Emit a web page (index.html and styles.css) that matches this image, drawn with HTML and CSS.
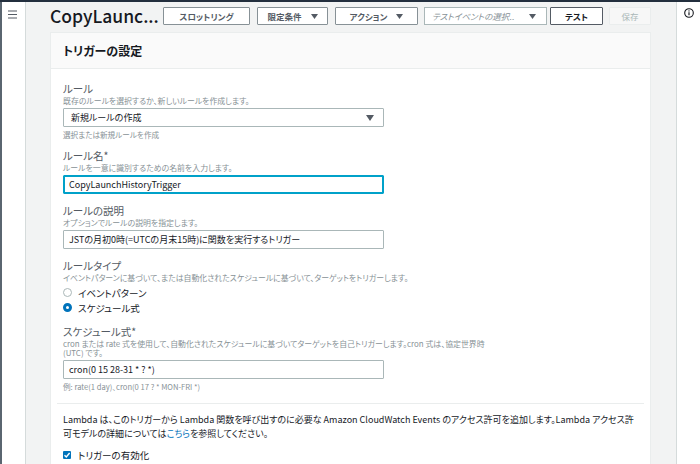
FILE: index.html
```html
<!DOCTYPE html>
<html lang="ja">
<head>
<meta charset="utf-8">
<title>CopyLaunchHistoryTrigger</title>
<link rel="stylesheet" href="styles.css">
</head>
<body>
<div class="topbar"></div>
<div class="app">
  <nav class="nav">
    <svg class="nav-toggle" width="9" height="9" viewBox="0 0 9 9"><path d="M0 1h9M0 4.5h9M0 8h9" stroke="#545b64" stroke-width="1.2"/></svg>
  </nav>
  <main class="main">
    <header class="toolbar">
      <h1 class="title">CopyLaunc...</h1>
      <div class="actions">
        <button class="btn btn-throttle">スロットリング</button>
        <button class="btn btn-qualifier">限定条件 <svg class="caret" width="7" height="5" viewBox="0 0 7 5"><path d="M0 0h7L3.5 5z" fill="#545b64"/></svg></button>
        <button class="btn btn-action">アクション <svg class="caret" width="7" height="5" viewBox="0 0 7 5"><path d="M0 0h7L3.5 5z" fill="#545b64"/></svg></button>
        <div class="test-select"><span>テストイベントの選択..</span><svg class="caret" width="7" height="5" viewBox="0 0 7 5"><path d="M0 0h7L3.5 5z" fill="#545b64"/></svg></div>
        <button class="btn btn-test">テスト</button>
        <button class="btn btn-save" disabled>保存</button>
      </div>
    </header>
    <section class="card">
      <div class="card-header">トリガーの設定</div>
      <div class="card-body">
        <div class="field field-hinted">
          <div class="field-label">ルール</div>
          <div class="field-desc">既存のルールを選択するか、新しいルールを作成します。</div>
          <div class="control control-select"><span>新規ルールの作成</span><svg width="8" height="6" viewBox="0 0 8 6"><path d="M0 0h8L4 6z" fill="#545b64"/></svg></div>
          <div class="field-hint">選択または新規ルールを作成</div>
        </div>
        <div class="field">
          <div class="field-label">ルール名*</div>
          <div class="field-desc">ルールを一意に識別するための名前を入力します。</div>
          <div class="control control-focus">CopyLaunchHistoryTrigger</div>
        </div>
        <div class="field">
          <div class="field-label">ルールの説明</div>
          <div class="field-desc">オプションでルールの説明を指定します。</div>
          <div class="control">JSTの月初0時(=UTCの月末15時)に関数を実行するトリガー</div>
        </div>
        <div class="field">
          <div class="field-label">ルールタイプ</div>
          <div class="field-desc">イベントパターンに基づいて、または自動化されたスケジュールに基づいて、ターゲットをトリガーします。</div>
          <div class="radios">
            <div class="radio"><span class="radio-dot"></span>イベントパターン</div>
            <div class="radio"><span class="radio-dot radio-on"></span>スケジュール式</div>
          </div>
        </div>
        <div class="field">
          <div class="field-label">スケジュール式*</div>
          <div class="field-desc">cron または rate 式を使用して、自動化されたスケジュールに基づいてターゲットを自己トリガーします。cron 式は、協定世界時 (UTC) です。</div>
          <div class="control">cron(0 15 28-31 * ? *)</div>
          <div class="field-hint">例: rate(1 day)、cron(0 17 ? * MON-FRI *)</div>
        </div>
        <hr class="sep">
        <p class="note">Lambda は、このトリガーから Lambda 関数を呼び出すのに必要な Amazon CloudWatch Events のアクセス許可を追加します。Lambda アクセス許可モデルの詳細については<a href="#" class="link">こちら</a>を参照してください。</p>
        <div class="check"><span class="check-box"><svg width="8" height="8" viewBox="0 0 8 8"><path d="M1.5 4.2l1.8 1.8 3.3-4" fill="none" stroke="#fff" stroke-width="1.4"/></svg></span>トリガーの有効化</div>
      </div>
    </section>
  </main>
  <aside class="panel">
    <svg class="info" width="10" height="10" viewBox="0 0 10 10"><circle cx="5" cy="5" r="4.3" fill="none" stroke="#16191f" stroke-width="1.1"/><path d="M5 4.3v3" stroke="#16191f" stroke-width="1.2"/><circle cx="5" cy="2.9" r="0.7" fill="#16191f"/></svg>
  </aside>
</div>
</body>
</html>
```

FILE: styles.css
```css
* { box-sizing: border-box; }

html, body {
  margin: 0;
  width: 700px;
  height: 464px;
  overflow: hidden;
}

body {
  font-family: "Noto Sans CJK JP", "Liberation Sans", sans-serif;
  font-feature-settings: "palt";
  color: #16191f;
  background: #fff;
}

.topbar {
  height: 2px;
  background: #232f3e;
}

.app {
  display: flex;
  height: 462px;
}

.nav {
  flex: none;
  width: 26px;
  background: #fff;
  border-left: 2px solid #5a6570;
  border-right: 1px solid #d5dbdb;
}

.nav-toggle {
  display: block;
  margin: 8px 0 0 6px;
}

.main {
  flex: 1;
  min-width: 0;
  display: flex;
  flex-direction: column;
  background: #f2f3f3;
  padding: 0 25px 0 24px;
}

.toolbar {
  flex: none;
  height: 30px;
  display: flex;
  align-items: center;
  justify-content: space-between;
  padding-bottom: 2px;
}

.title {
  margin: 0;
  font-size: 17.5px;
  font-weight: 500;
  line-height: 24px;
  color: #16191f;
}

.actions {
  display: flex;
  align-items: center;
  gap: 6px;
}

.btn {
  height: 18px;
  display: inline-flex;
  align-items: center;
  justify-content: center;
  gap: 9px;
  padding: 0;
  border: 1px solid #879196;
  border-radius: 1px;
  background: #fff;
  color: #545b64;
  font-family: inherit;
  font-feature-settings: "palt";
  font-size: 8.5px;
  font-weight: 700;
}

.btn-throttle { width: 87px; margin-right: 1px; }
.btn-qualifier { width: 71px; margin-right: 1px; }
.btn-action { width: 83px; }

.btn-test {
  width: 53px;
  border-color: #545b64;
  color: #16191f;
}

.btn-save {
  width: 42px;
  border-color: #eaeded;
  background: #f7f7f7;
  color: #aab7b8;
  font-weight: 400;
}

.test-select {
  width: 123px;
  height: 18px;
  margin-right: -3px;
  display: flex;
  align-items: center;
  justify-content: space-between;
  padding: 0 10px 0 7px;
  border: 1px solid #aab7b8;
  background: #fff;
  color: #879196;
  font-size: 8.5px;
  font-style: italic;
}

.caret { display: block; }

.card {
  flex: 1;
  background: #fff;
  border: 1px solid #eaeded;
  border-bottom: none;
}

.card-header {
  height: 36px;
  display: flex;
  align-items: center;
  padding: 0 0 1px 12px;
  background: #fafafa;
  border-bottom: 1px solid #eaeded;
  font-size: 12px;
  font-weight: 700;
  color: #16191f;
}

.card-body {
  padding: 13px 12px 0;
}

.field + .field { margin-top: 10px; }
.field-hinted { margin-bottom: 3px; }

.field-label {
  font-size: 10.5px;
  line-height: 14px;
  color: #545b64;
}

.field-desc {
  max-width: 430px;
  font-size: 7.9px;
  line-height: 9px;
  color: #879196;
}

.field-hint {
  margin-top: 3px;
  font-size: 7.6px;
  line-height: 9px;
  color: #879196;
}

.control {
  width: 321px;
  height: 19px;
  margin-top: 3px;
  display: flex;
  align-items: center;
  padding: 0 5px;
  border: 1px solid #aab7b8;
  border-radius: 1px;
  background: #fff;
  font-size: 9px;
  color: #16191f;
  white-space: nowrap;
}

.control-select {
  justify-content: space-between;
  padding: 0 9px 0 7px;
}

.control-focus {
  border-color: #00a1c9;
  box-shadow: inset 0 0 0 1px #00a1c9;
}

.radios {
  margin-top: 3px;
}

.radio {
  height: 15px;
  display: flex;
  align-items: center;
  gap: 6px;
  font-size: 9.5px;
  color: #16191f;
}

.radio-dot {
  width: 9px;
  height: 9px;
  border-radius: 50%;
  border: 1px solid #aab7b8;
  background: #fff;
}

.radio-on {
  border: 3px solid #0073bb;
}

.sep {
  margin: 12px -6px 0;
  border: 0;
  border-top: 1px solid #eaeded;
  height: 0;
}

.note {
  margin: 9px 0 0;
  font-size: 9px;
  line-height: 14px;
  color: #16191f;
}

.link {
  color: #0073bb;
  text-decoration: none;
}

.check {
  margin-top: 7px;
  height: 14px;
  display: flex;
  align-items: center;
  gap: 7px;
  font-size: 9.5px;
  color: #16191f;
}

.check-box {
  width: 8px;
  height: 8px;
  display: flex;
  align-items: center;
  justify-content: center;
  background: #0073bb;
  border-radius: 1px;
}

.check-box svg { display: block; }

.panel {
  flex: none;
  width: 24px;
  background: #fff;
  border-left: 1px solid #d5dbdb;
}

.info {
  display: block;
  margin: 6px 0 0 7px;
}
```
